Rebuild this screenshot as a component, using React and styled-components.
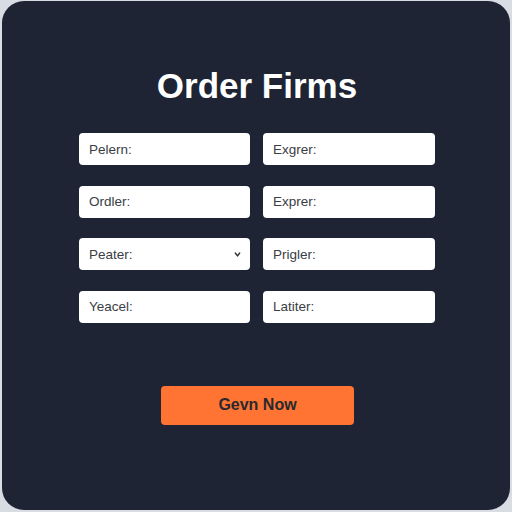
import React from "react";
import styled, { createGlobalStyle } from "styled-components";

const Global = createGlobalStyle`
  html, body { margin: 0; padding: 0; }
  body {
    background: #d9dce3;
    font-family: "Liberation Sans", Arial, sans-serif;
    width: 512px;
    height: 512px;
    overflow: hidden;
  }
`;

const Card = styled.div`
  box-sizing: border-box;
  margin: 1px 2px;
  width: 508px;
  height: 509px;
  border-radius: 22px;
  background: #1e2433;
  display: flex;
  flex-direction: column;
  align-items: center;
  padding-top: 65px;
`;

const Title = styled.h1`
  margin: 0;
  font-size: 35px;
  line-height: 40px;
  font-weight: 700;
  color: #ffffff;
  padding-left: 2px;
`;

const Grid = styled.div`
  margin-top: 27px;
  margin-left: 2px;
  display: grid;
  grid-template-columns: 171px 172px;
  column-gap: 13px;
  row-gap: 20.5px;
`;

const Field = styled.div`
  box-sizing: border-box;
  height: 32px;
  background: #ffffff;
  border-radius: 4px;
  display: flex;
  align-items: center;
  justify-content: space-between;
  padding: 0 9px 0 10px;
  font-size: 13.5px;
  color: #3a3d44;
`;

const Chevron = styled.svg`
  width: 7px;
  height: 7px;
`;

const Button = styled.button`
  margin-top: 63px;
  width: 193px;
  height: 39px;
  border: none;
  border-radius: 4px;
  background: #ff7433;
  color: #2a2a2e;
  font-family: "Liberation Sans", Arial, sans-serif;
  font-size: 16px;
  font-weight: 700;
  margin-left: 3px;
`;

const fields = [
  { label: "Pelern:" },
  { label: "Exgrer:" },
  { label: "Ordler:" },
  { label: "Exprer:" },
  { label: "Peater:", select: true },
  { label: "Prigler:" },
  { label: "Yeacel:" },
  { label: "Latiter:" },
];

export default function App() {
  return (
    <>
      <Global />
      <Card>
        <Title>Order Firms</Title>
        <Grid>
          {fields.map((f) => (
            <Field key={f.label}>
              <span>{f.label}</span>
              {f.select && (
                <Chevron viewBox="0 0 10 10">
                  <path d="M2 3 L5 7 L8 3" fill="none" stroke="#333" strokeWidth="2.2" strokeLinecap="round" strokeLinejoin="round" />
                </Chevron>
              )}
            </Field>
          ))}
        </Grid>
        <Button>Gevn Now</Button>
      </Card>
    </>
  );
}
